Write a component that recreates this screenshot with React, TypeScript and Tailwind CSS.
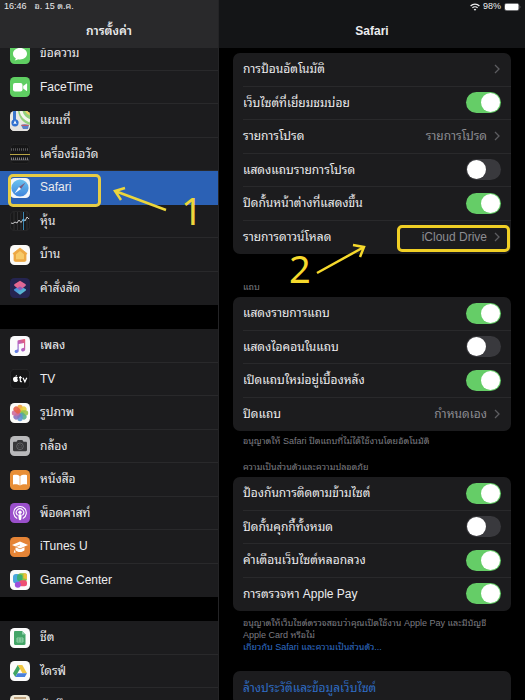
import type { ReactNode } from "react";

/* ---------- App icons, drawn on a 20 x 20 grid ---------- */

const tile = "block size-5 shrink-0";

function MessagesIcon() {
  return (
    <svg viewBox="0 0 20 20" className={tile} aria-hidden="true">
      <rect width="20" height="20" rx="4.5" fill="#5fce62" />
      <path d="M10 4c-4 0-7 2.500-7 5.700 0 2 1.100 3.700 2.900 4.700-.2.800-.7 1.500-1.300 2 1.300 0 2.500-.5 3.400-1.200.6.100 1.300.2 2 .2 4 0 7-2.500 7-5.700S14 4 10 4z" fill="#fff" />
    </svg>
  );
}

function FaceTimeIcon() {
  return (
    <svg viewBox="0 0 20 20" className={tile} aria-hidden="true">
      <rect width="20" height="20" rx="4.500" fill="#5fce62" />
      <rect x="3" y="6" width="9.500" height="8.500" rx="2" fill="#fff" />
      <path d="M13.200 9l3-2.300c.4-.3.900-.1.900.4v6.300c0 .5-.5.700-.9.400l-3-2.300z" fill="#fff" />
    </svg>
  );
}

function MapsIcon() {
  return (
    <svg viewBox="0 0 20 20" className={tile} aria-hidden="true">
      <defs>
        <clipPath id="maps-tile"><rect width="20" height="20" rx="4.500" /></clipPath>
      </defs>
      <g clipPath="url(#maps-tile)">
        <rect width="20" height="20" fill="#e9e8e2" />
        <path d="M8 0h12v14C13 12 9 7 8 0z" fill="#93d07e" />
        <path d="M11 0c1 5 4 8 9 10" stroke="#f4f5ee" strokeWidth="3" fill="none" />
        <path d="M20 0h-5c1 2 3 4 5 4z" fill="#f3cf66" />
        <path d="M0 10l20 8v2H0z" fill="#e4e2df" />
        <path d="M11 14c2-1 5-1 8 0l-1 4h-5z" fill="#5a7fc6" />
        <path d="M11.500 14.300h7" stroke="#d9534f" strokeWidth="1" />
        <path d="M4.500 0v11" stroke="#3b76cc" strokeWidth="3" />
        <circle cx="5" cy="11.800" r="3.600" fill="#2f6fd0" />
        <path d="M5 9.300l1.700 4L5 12.500l-1.700.8z" fill="#fff" />
      </g>
    </svg>
  );
}

function MeasureIcon() {
  return (
    <svg viewBox="0 0 20 20" className={tile} aria-hidden="true">
      <rect x=".3" y=".3" width="19.400" height="19.400" rx="4.500" fill="#161617" stroke="#2b2b2c" strokeWidth=".6" />
      <path d="M1 5.500h18" stroke="#77777a" strokeWidth="2.500" strokeDasharray=".7 1.300" />
      <path d="M0 10.500h20" stroke="#b9a544" strokeWidth="1" />
      <path d="M1 14.800h18" stroke="#a8a8aa" strokeWidth="2.500" strokeDasharray=".7 1.300" />
      <path d="M1 16h18" stroke="#8b8b8d" strokeWidth=".5" />
    </svg>
  );
}

function SafariIcon() {
  return (
    <svg viewBox="0 0 20 20" className={tile} aria-hidden="true">
      <defs>
        <linearGradient id="safari-dial" x1="0" y1="0" x2="0" y2="1">
          <stop offset="0" stopColor="#6cc3ee" />
          <stop offset="1" stopColor="#3f84dc" />
        </linearGradient>
      </defs>
      <rect width="20" height="20" rx="4.500" fill="#f2f5f9" />
      <circle cx="10" cy="10" r="8.600" fill="url(#safari-dial)" />
      <path d="M15.500 4.500L9 9l2 2z" fill="#7a5b80" />
      <path d="M4.500 15.500L9 9l2 2z" fill="#fff" />
    </svg>
  );
}

function StocksIcon() {
  return (
    <svg viewBox="0 0 20 20" className={tile} aria-hidden="true">
      <rect x=".3" y=".3" width="19.400" height="19.400" rx="4.500" fill="#19191a" stroke="#343436" strokeWidth=".6" />
      <path d="M4 1v18M7.500 1v18M11 1v18M17 1v18" stroke="#3b3b3d" strokeWidth=".7" />
      <path d="M1 12l2 .5 2-1.500 2 1 2-3 2 2.500 2-3 2 1.500 2-4 2 2" stroke="#c8c8ca" strokeWidth="1" fill="none" />
      <path d="M13.500 1v18" stroke="#3f93c4" strokeWidth=".9" />
      <circle cx="13.500" cy="9" r="1.200" fill="#54a8d8" />
    </svg>
  );
}

function HomeIcon() {
  return (
    <svg viewBox="0 0 20 20" className={tile} aria-hidden="true">
      <rect width="20" height="20" rx="4.500" fill="#fbfaf7" />
      <path d="M10 3l6.800 5.300c.3.300.1.800-.3.800H16v6c0 .8-.5 1.300-1.300 1.300H5.300C4.500 16.400 4 15.900 4 15.100v-6h-.5c-.4 0-.6-.5-.3-.8z" fill="#eda843" stroke="#eda843" strokeWidth=".8" strokeLinejoin="round" />
      <path d="M10 6l4 3.200v5.100H6V9.200z" fill="#f7ca68" />
    </svg>
  );
}

function ShortcutsIcon() {
  return (
    <svg viewBox="0 0 20 20" className={tile} aria-hidden="true">
      <defs>
        <linearGradient id="shortcut-top" x1="0" y1="0" x2="1" y2="1">
          <stop offset="0" stopColor="#f0668b" />
          <stop offset="1" stopColor="#d4699e" />
        </linearGradient>
        <linearGradient id="shortcut-bottom" x1="0" y1="0" x2="1" y2="1">
          <stop offset="0" stopColor="#3c77dd" />
          <stop offset="1" stopColor="#64d3cf" />
        </linearGradient>
      </defs>
      <rect width="20" height="20" rx="4.500" fill="#252450" />
      <path d="M10 8l5.500 3c.8.500.8 1.200 0 1.700L10 16.800l-5.500-4.100c-.8-.5-.8-1.200 0-1.700z" fill="url(#shortcut-bottom)" />
      <path d="M10 2.800L15.300 6c.8.500.8 1.400 0 1.900L10 12.200 4.700 7.900c-.8-.5-.8-1.400 0-1.900z" fill="url(#shortcut-top)" />
      <path d="M10 8.500l3 1.800-3 2-3-2z" fill="#8b5dbb" />
    </svg>
  );
}

function MusicIcon() {
  return (
    <svg viewBox="0 0 20 20" className={tile} aria-hidden="true">
      <defs>
        <linearGradient id="note" x1="1" y1="0" x2="0" y2="1">
          <stop offset="0" stopColor="#ef5d6b" />
          <stop offset=".5" stopColor="#b260c4" />
          <stop offset="1" stopColor="#4a8bee" />
        </linearGradient>
      </defs>
      <rect width="20" height="20" rx="4.500" fill="#fbfafc" />
      <path d="M7.500 5.200c0-.5.300-.8.800-.9l6-1.200c.5-.1.900.2.900.7v9.400c0 1.300-.9 2.200-2.200 2.200-1.100 0-1.900-.6-1.900-1.500 0-1 .8-1.600 1.900-1.800.8-.1 1-.4 1-1V7l-5.300 1.100v6.700c0 1.300-.9 2.200-2.200 2.200-1.100 0-1.900-.6-1.900-1.500 0-1 .8-1.600 1.900-1.800.8-.1 1-.4 1-1z" fill="url(#note)" />
    </svg>
  );
}

function TvIcon() {
  return (
    <svg viewBox="0 0 20 20" className={tile} aria-hidden="true">
      <rect x=".3" y=".3" width="19.400" height="19.400" rx="4.500" fill="#161617" stroke="#343436" strokeWidth=".6" />
      <path d="M5.800 7.900c.8-.3 1.600-.2 2.100.5-.9.700-.9 2.100.2 2.700-.4 1.100-1.100 2-1.700 1.900-.5-.1-.8-.2-1.300 0-1.100.4-2.300-1.600-2.100-3.200.2-1.500 1.400-2.200 2.800-1.900zM5.500 7.600c0-.9.600-1.500 1.400-1.700 0 .9-.5 1.600-1.400 1.700z" fill="#fff" />
      <path d="M10.300 7v4.700c0 .8.400 1.100 1.500 1M9 8.700h2.800M13 8.700l1.900 4.100 1.900-4.100" stroke="#fff" strokeWidth="1.200" fill="none" />
    </svg>
  );
}

const petals = [
  { angle: 0, color: "#f2a23c" },
  { angle: 45, color: "#e9cf3d" },
  { angle: 90, color: "#9ac44a" },
  { angle: 135, color: "#56b08b" },
  { angle: 180, color: "#5d93d2" },
  { angle: 225, color: "#8c72bd" },
  { angle: 270, color: "#cf6d9f" },
  { angle: 315, color: "#e6624a" },
];

function PhotosIcon() {
  return (
    <svg viewBox="0 0 20 20" className={tile} aria-hidden="true">
      <rect width="20" height="20" rx="4.500" fill="#fbfbf8" />
      {petals.map((p) => (
        <rect key={p.angle} x="7.300" y="1.800" width="5.400" height="8" rx="2.700" fill={p.color} opacity=".9" transform={`rotate(${p.angle} 10 10)`} />
      ))}
    </svg>
  );
}

function CameraIcon() {
  return (
    <svg viewBox="0 0 20 20" className={tile} aria-hidden="true">
      <rect width="20" height="20" rx="4.500" fill="#b9b9bb" />
      <path d="M3 7c0-.7.500-1.200 1.200-1.200h2.300l1-1.500c.2-.3.400-.4.700-.4h3.600c.3 0 .5.100.7.400l1 1.500h2.300c.7 0 1.200.5 1.200 1.200v7c0 .7-.5 1.200-1.200 1.200H4.200c-.7 0-1.200-.5-1.200-1.200z" fill="#38383a" />
      <circle cx="10" cy="10.300" r="3.300" fill="#2b2b2c" stroke="#8a8a8d" strokeWidth=".6" />
      <circle cx="10" cy="10.300" r="1.800" fill="#39393b" stroke="#68686a" strokeWidth=".5" />
    </svg>
  );
}

function BooksIcon() {
  return (
    <svg viewBox="0 0 20 20" className={tile} aria-hidden="true">
      <rect width="20" height="20" rx="4.500" fill="#e88e35" />
      <path d="M9.700 6.200C8.300 4.800 5.300 4.500 3 5.200v9.300c2.300-.6 5.300-.3 6.700.9zM10.300 6.200c1.400-1.400 4.400-1.700 6.700-1v9.300c-2.300-.6-5.300-.3-6.700.9z" fill="#fff" />
    </svg>
  );
}

function PodcastsIcon() {
  return (
    <svg viewBox="0 0 20 20" className={tile} aria-hidden="true">
      <rect width="20" height="20" rx="4.500" fill="#9a4fcb" />
      <g fill="none" stroke="#fff" strokeWidth="1.100" strokeLinecap="round">
        <path d="M6.800 15.200a6.300 6.300 0 1 1 6.400 0" />
        <path d="M7.300 12a3.700 3.700 0 1 1 5.400 0" />
      </g>
      <circle cx="10" cy="9.300" r="1.700" fill="#fff" />
      <path d="M8.300 12.400c0-.7.700-1.100 1.700-1.100s1.700.4 1.700 1.100l-.5 3.800c-.1.700-.5 1-1.200 1s-1.100-.3-1.200-1z" fill="#fff" />
    </svg>
  );
}

function ITunesUIcon() {
  return (
    <svg viewBox="0 0 20 20" className={tile} aria-hidden="true">
      <rect width="20" height="20" rx="4.500" fill="#e58436" />
      <path d="M2 8l8-3.500L18 8l-8 3.500z" fill="#fff" />
      <path d="M5.500 10.300l4.500 2 4.500-2v3c-1 1.200-2.600 1.800-4.500 1.800s-3.500-.6-4.500-1.800z" fill="#fff" />
      <path d="M10 8l-4 1.500c-1.500.8-1.800 2.500-1.500 4" stroke="#e58436" strokeWidth=".7" fill="none" />
      <path d="M4.700 12.500l1 3-2 .2z" fill="#fff" />
    </svg>
  );
}

function GameCenterIcon() {
  return (
    <svg viewBox="0 0 20 20" className={tile} aria-hidden="true">
      <rect width="20" height="20" rx="4.500" fill="#fbfbfa" />
      <rect x="3" y="4" width="8.500" height="9.500" rx="3" fill="#4aa7dc" />
      <rect x="8" y="3.200" width="9" height="8" rx="2.500" fill="#8fc63f" />
      <rect x="7" y="4.500" width="5.500" height="6.500" rx="2" fill="#3cae76" />
      <path d="M13.500 3.200H15c1.300 0 2 .7 2 2v4l-3.500-1z" fill="#edbd3c" />
      <rect x="9" y="10.300" width="8" height="6" rx="2.500" fill="#ee4f72" />
      <circle cx="7.800" cy="14.800" r="3" fill="#9d4fdb" />
    </svg>
  );
}

function SheetsIcon() {
  return (
    <svg viewBox="0 0 20 20" className={tile} aria-hidden="true">
      <rect width="20" height="20" rx="4.500" fill="#fcfcfc" />
      <path d="M5.200 3h6.800l3.500 3.500v9.300c0 .7-.5 1.200-1.200 1.200H5.200c-.7 0-1.200-.5-1.200-1.200V4.200C4 3.500 4.500 3 5.200 3z" fill="#43a567" />
      <path d="M12 3l3.500 3.500H12z" fill="#8dceaa" />
      <path d="M7 10h6v4H7zM7 12h6M10 10v4" fill="none" stroke="#a5dab9" strokeWidth=".8" />
    </svg>
  );
}

function DriveIcon() {
  return (
    <svg viewBox="0 0 20 20" className={tile} aria-hidden="true">
      <rect width="20" height="20" rx="4.500" fill="#fcfcfc" />
      <path d="M7.800 4L10 7.800 5.300 16 3 12.200z" fill="#3fa563" />
      <path d="M7.800 4h4.500l4.700 8.200h-4.500z" fill="#f0c743" />
      <path d="M7.500 12.200H17L14.800 16H5.300z" fill="#4a80dc" />
    </svg>
  );
}

function NotesTileIcon() {
  return (
    <svg viewBox="0 0 20 20" className={tile} aria-hidden="true">
      <rect width="20" height="20" rx="4.500" fill="#f0ead9" />
      <path d="M4 3h12" stroke="#b08d62" strokeWidth="1.500" />
      <path d="M4 5v12M16 5v12" stroke="#cf9e62" strokeWidth="1" />
    </svg>
  );
}

function Chevron() {
  return (
    <svg viewBox="0 0 6 10" className="h-[10px] w-[6px] shrink-0" aria-hidden="true">
      <path d="M1 1l4 4-4 4" fill="none" stroke="#5c5c60" strokeWidth="1.300" />
    </svg>
  );
}

/* ---------- Sidebar ---------- */

type App = { name: string; icon: ReactNode; selected?: boolean };

const systemApps: App[] = [
  { name: "ข้อความ", icon: <MessagesIcon /> },
  { name: "FaceTime", icon: <FaceTimeIcon /> },
  { name: "แผนที่", icon: <MapsIcon /> },
  { name: "เครื่องมือวัด", icon: <MeasureIcon /> },
  { name: "Safari", icon: <SafariIcon />, selected: true },
  { name: "หุ้น", icon: <StocksIcon /> },
  { name: "บ้าน", icon: <HomeIcon /> },
  { name: "คำสั่งลัด", icon: <ShortcutsIcon /> },
];

const mediaApps: App[] = [
  { name: "เพลง", icon: <MusicIcon /> },
  { name: "TV", icon: <TvIcon /> },
  { name: "รูปภาพ", icon: <PhotosIcon /> },
  { name: "กล้อง", icon: <CameraIcon /> },
  { name: "หนังสือ", icon: <BooksIcon /> },
  { name: "พ็อดคาสท์", icon: <PodcastsIcon /> },
  { name: "iTunes U", icon: <ITunesUIcon /> },
  { name: "Game Center", icon: <GameCenterIcon /> },
];

const otherApps: App[] = [
  { name: "ชีต", icon: <SheetsIcon /> },
  { name: "ไดรฟ์", icon: <DriveIcon /> },
  { name: "บันทึก", icon: <NotesTileIcon /> },
];

function AppList({ apps, className }: { apps: App[]; className: string }) {
  return (
    <ul className={`grid shrink-0 auto-rows-fr bg-[#1c1c1e] ${className}`}>
      {apps.map((app) => (
        <li key={app.name} className="group min-h-0">
          <button
            type="button"
            aria-current={app.selected ? "page" : undefined}
            className={`flex h-full w-full items-center gap-[10px] pl-[10px] text-left text-xs text-[#ececee] ${app.selected ? "bg-[#2b61b5]" : ""}`}
          >
            {app.icon}
            <span className={`flex h-full flex-1 items-center border-b group-last:border-transparent ${app.selected ? "border-transparent" : "border-[#29292b]"}`}>
              {app.name}
            </span>
          </button>
        </li>
      ))}
    </ul>
  );
}

/* ---------- Settings ---------- */

function Card({ children, className }: { children: ReactNode; className: string }) {
  return <div className={`grid shrink-0 auto-rows-fr rounded-[7px] bg-[#1c1c1e] pl-[10px] ${className}`}>{children}</div>;
}

const row = "flex min-h-0 w-full items-center justify-between border-b border-[#29292b] pr-[10px] text-left text-xs text-[#ececee] last:border-transparent";

function ToggleRow({ label, on = false }: { label: string; on?: boolean }) {
  return (
    <label className={row}>
      {label}
      <input
        type="checkbox"
        role="switch"
        defaultChecked={on}
        className="flex h-[21px] w-[35px] shrink-0 appearance-none items-center rounded-full bg-[#39393d] px-px before:size-[19px] before:rounded-full before:bg-white checked:justify-end checked:bg-[#65cd67]"
      />
    </label>
  );
}

function LinkRow({ label, value }: { label: string; value?: string }) {
  return (
    <button type="button" className={row}>
      <span>{label}</span>
      <span className="flex items-center gap-[7px] pr-px text-[#8d8d92]">
        {value}
        <Chevron />
      </span>
    </button>
  );
}

/* ---------- Hand-placed tutorial marks ---------- */

function Annotations() {
  return (
    <div className="pointer-events-none absolute inset-0">
      <div className="absolute top-[174px] left-[8px] h-[33px] w-[93px] rounded-[5px] border-[3px] border-[#e6cc45]" />
      <div className="absolute top-[225px] left-[397px] h-[27px] w-[113px] rounded-[5px] border-[3px] border-[#f0cf25]" />
      <svg className="absolute top-0 left-0 h-[300px] w-[400px]" viewBox="0 0 400 300" fill="none" strokeWidth="2.500" aria-hidden="true">
        <path d="M166 210L115 191M125 188L115 191L121 200" stroke="#ecd63c" />
        <path d="M317 273L364 247M353 245L364 247L360 257" stroke="#f6d92c" />
      </svg>
      <span className="absolute top-[184px] left-[181px] font-['Noto_Sans',sans-serif] text-[38px] leading-[52px] text-[#ecd63c]">1</span>
      <span className="absolute top-[242px] left-[289px] font-['Noto_Sans',sans-serif] text-[38px] leading-[52px] text-[#f6d92c]">2</span>
    </div>
  );
}

export default function App() {
  return (
    <div className="relative flex h-screen overflow-hidden bg-black font-['Liberation_Sans','Noto_Sans_Thai_Looped','Loma','Garuda','Waree','Noto_Sans_Thai',sans-serif]">
      <aside className="flex w-[219px] shrink-0 flex-col border-r border-[#242426]">
        <header className="z-10 flex h-12 shrink-0 flex-col bg-[#29292b] text-[#ececee]">
          <div className="flex h-[14px] items-center gap-2 pl-1 text-[9px]">
            <span>16:46</span>
            <span>อ. 15 ต.ค.</span>
          </div>
          <h1 className="flex flex-1 items-center justify-center text-xs font-semibold">การตั้งค่า</h1>
        </header>
        <nav className="flex min-h-0 flex-1 flex-col gap-6 overflow-hidden">
          <AppList apps={systemApps} className="-mt-[11px] h-[268px]" />
          <AppList apps={mediaApps} className="h-[268px]" />
          <AppList apps={otherApps} className="h-[101px]" />
        </nav>
      </aside>

      <main className="flex min-w-0 flex-1 flex-col">
        <header className="flex h-12 shrink-0 flex-col bg-[#141517] text-[#ececee]">
          <div className="flex h-[14px] items-center justify-end gap-[3px] pr-1 text-[9px]">
            <svg viewBox="0 0 10 8" className="h-2 w-[10px]" aria-hidden="true">
              <g fill="none" stroke="#ececee" strokeWidth="1.300">
                <path d="M.6 3a6.200 6.200 0 0 1 8.800 0" />
                <path d="M2.400 4.900a3.700 3.700 0 0 1 5.200 0" />
              </g>
              <path d="M5 7.800L3.700 6.400a1.900 1.900 0 0 1 2.600 0z" fill="#ececee" />
            </svg>
            <span>98%</span>
            <svg viewBox="0 0 17 8" className="h-2 w-[17px]" aria-hidden="true">
              <rect x=".5" y=".3" width="14.500" height="7.400" rx="2" fill="none" stroke="#77777a" strokeWidth=".6" />
              <rect x="1" y=".8" width="13.500" height="6.400" rx="1.400" fill="#fff" />
              <path d="M15.800 2.800c.8.300.8 2.100 0 2.400z" fill="#77777a" />
            </svg>
          </div>
          <h2 className="flex flex-1 items-center justify-center text-xs font-semibold">Safari</h2>
        </header>

        <div className="flex min-h-0 flex-1 flex-col overflow-hidden px-[14px] pt-[5px]">
          <Card className="h-[201px]">
            <LinkRow label="การป้อนอัตโนมัติ" />
            <ToggleRow label="เว็บไซต์ที่เยี่ยมชมบ่อย" on />
            <LinkRow label="รายการโปรด" value="รายการโปรด" />
            <ToggleRow label="แสดงแถบรายการโปรด" />
            <ToggleRow label="ปิดกั้นหน้าต่างที่แสดงขึ้น" on />
            <LinkRow label="รายการดาวน์โหลด" value="iCloud Drive" />
          </Card>

          <h3 className="flex h-[43px] shrink-0 items-end px-[10px] pb-1 text-[9px] leading-3 text-[#7c7c81]">แถบ</h3>
          <Card className="h-[134px]">
            <ToggleRow label="แสดงรายการแถบ" on />
            <ToggleRow label="แสดงไอคอนในแถบ" />
            <ToggleRow label="เปิดแถบใหม่อยู่เบื้องหลัง" on />
            <LinkRow label="ปิดแถบ" value="กำหนดเอง" />
          </Card>
          <p className="shrink-0 px-[10px] pt-1 text-[9px] leading-3 text-[#7c7c81]">อนุญาตให้ Safari ปิดแถบที่ไม่ได้ใช้งานโดยอัตโนมัติ</p>

          <h3 className="flex h-[30px] shrink-0 items-end px-[10px] pb-1 text-[9px] leading-3 text-[#7c7c81]">ความเป็นส่วนตัวและความปลอดภัย</h3>
          <Card className="h-[134px]">
            <ToggleRow label="ป้องกันการติดตามข้ามไซต์" on />
            <ToggleRow label="ปิดกั้นคุกกี้ทั้งหมด" />
            <ToggleRow label="คำเตือนเว็บไซต์หลอกลวง" on />
            <ToggleRow label="การตรวจหา Apple Pay" on />
          </Card>
          <p className="h-[60px] shrink-0 px-[10px] pt-[6px] text-[9px] leading-3 whitespace-nowrap text-[#7c7c81]">
            อนุญาตให้เว็บไซต์ตรวจสอบว่าคุณเปิดใช้งาน Apple Pay และมีบัญชี
            <br />
            Apple Card หรือไม่
            <br />
            <a href="#privacy" className="text-[#2f6cc4]">เกี่ยวกับ Safari และความเป็นส่วนตัว...</a>
          </p>

          <Card className="h-[34px]">
            <button type="button" className="text-left text-xs text-[#2f6cc4]">ล้างประวัติและข้อมูลเว็บไซต์</button>
          </Card>
        </div>
      </main>

      <Annotations />
    </div>
  );
}
